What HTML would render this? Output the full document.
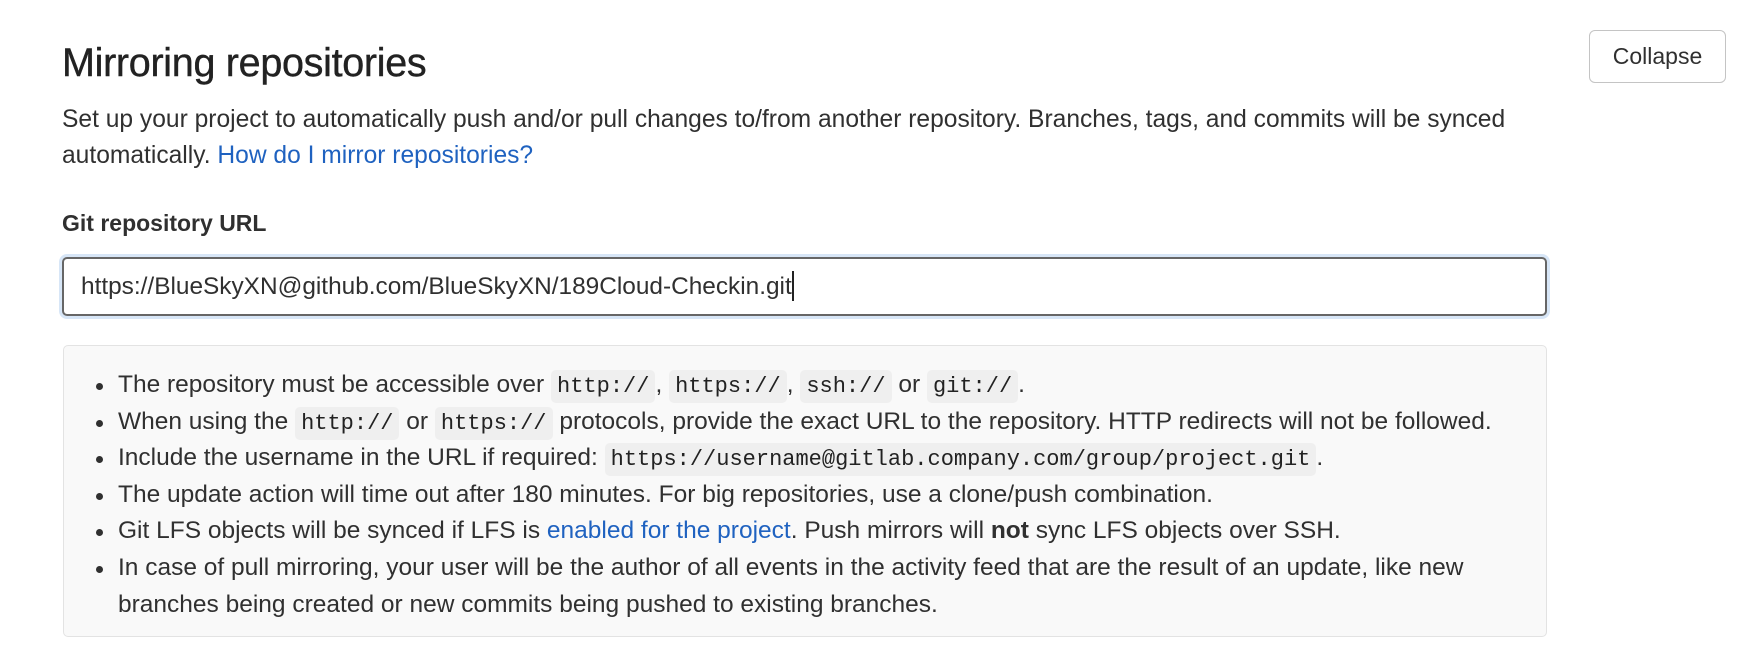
<!DOCTYPE html>
<html><head><meta charset="utf-8"><style>
body{margin:0;background:#fff;width:1744px;height:659px;overflow:hidden;font-family:"Liberation Sans",sans-serif;color:#303030;position:relative}
.a{position:absolute;white-space:nowrap}
h2{position:absolute;left:62px;top:40px;margin:0;font-size:39.5px;line-height:46px;font-weight:normal;letter-spacing:-0.3px;color:#222;-webkit-text-stroke:0.4px #222}
.p{font-size:24.6px;line-height:36px}
a{color:#1f62c0;text-decoration:none}
.btn{position:absolute;left:1589px;top:30px;width:137px;height:53px;border:1.5px solid #c4c4c4;border-radius:6px;box-sizing:border-box;font-size:23px;text-align:center;line-height:50px;color:#303030}
.lbl{left:62px;top:210px;font-size:23px;font-weight:bold;color:#303030}
.inp{position:absolute;left:62px;top:257px;width:1485px;height:59px;box-sizing:border-box;border:2px solid #666;border-radius:5px;box-shadow:0 0 0 3px #d7e6f7;font-size:24.4px;line-height:55px;padding-left:17px;white-space:nowrap}
.cur{display:inline-block;width:2px;height:30px;background:#222;vertical-align:middle;margin-top:-4px}
.box{position:absolute;left:63px;top:345px;width:1484px;height:292px;box-sizing:border-box;border:1px solid #e3e3e3;border-radius:5px;background:#f9f9f9}
ul{margin:0;padding:0;position:absolute;left:54px;top:21px;font-size:24.5px;line-height:36.6px;list-style:none}
li{position:relative;white-space:nowrap}
li:before{content:"";position:absolute;left:-22px;top:16px;width:7px;height:7px;border-radius:50%;background:#303030}
code{font-family:"Liberation Mono","DejaVu Sans Mono",monospace;font-size:22px;line-height:1;background:#efefef;border-radius:5px;padding:4px 6px;color:#222}
</style></head><body>
<h2>Mirroring repositories</h2>
<div class="btn">Collapse</div>
<div class="a p" style="left:62px;top:102px">Set up your project to automatically push and/or pull changes to/from another repository. Branches, tags, and commits will be synced<br>automatically. <a>How do I mirror repositories?</a></div>
<div class="a lbl">Git repository URL</div>
<div class="inp">https://BlueSkyXN@github.com/BlueSkyXN/189Cloud-Checkin.git<span class="cur"></span></div>
<div class="box"><ul>
<li>The repository must be accessible over <code>http://</code>, <code>https://</code>, <code>ssh://</code> or <code>git://</code>.</li>
<li>When using the <code>http://</code> or <code>https://</code> protocols, provide the exact URL to the repository. HTTP redirects will not be followed.</li>
<li>Include the username in the URL if required: <code>https://username@gitlab.company.com/group/project.git</code>.</li>
<li>The update action will time out after 180 minutes. For big repositories, use a clone/push combination.</li>
<li>Git LFS objects will be synced if LFS is <a>enabled for the project</a>. Push mirrors will <b>not</b> sync LFS objects over SSH.</li>
<li>In case of pull mirroring, your user will be the author of all events in the activity feed that are the result of an update, like new<br>branches being created or new commits being pushed to existing branches.</li>
</ul></div>
</body></html>
